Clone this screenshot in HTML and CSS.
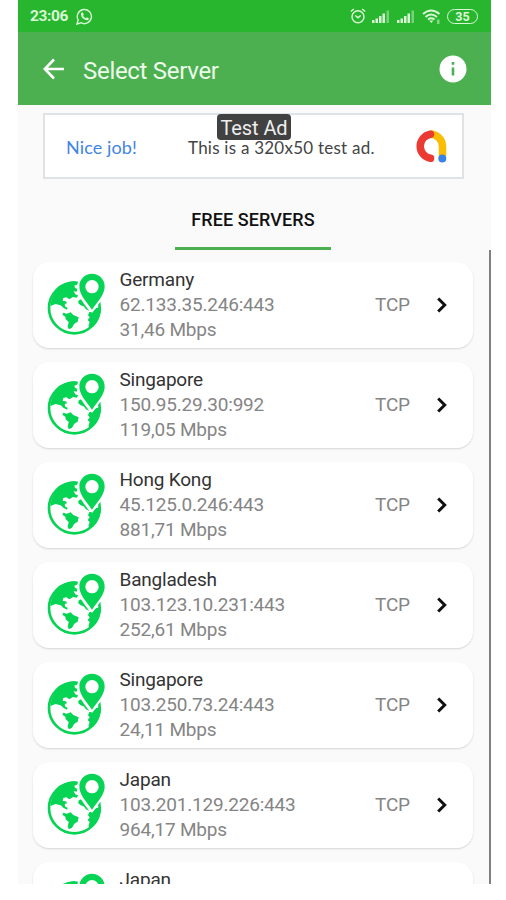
FILE: index.html
```html
<!DOCTYPE html>
<html lang="en">
<head>
    <meta charset="UTF-8">
    <meta name="viewport" content="width=device-width, initial-scale=1.0">
    <title>Select Server</title>
    <link rel="stylesheet" href="styles.css">
</head>
<body>
    <!-- Shared icons -->
    <svg class="sprite" aria-hidden="true">
        <symbol id="globe" viewBox="18 21 180 192">
            <circle cx="103" cy="129" r="76" fill="none" stroke="currentColor" stroke-width="8"/>
            <path fill="currentColor" d="M103 49 L112 52 L111 59 L103 62 L105 68 L112 72 L110 80 L101 79 L106 88 L114 91 L111 98 L99 96 L88 103 L79 97 L70 99 L68 108 L78 109 L81 115 L74 117 L76 125 L83 128 L81 134 L70 128 L62 121 L46 117 L32 123 C32 95 57 51 103 49 Z"/>
            <path fill="currentColor" d="M70 143 L80 146 L92 142 L100 150 L116 157 L113 170 L103 176 L96 188 L87 193 L83 185 L86 171 L77 163 L76 155 L67 149 Z"/>
            <path fill="currentColor" d="M183 125 C184 151 172 177 154 188 L145 184 L149 171 L143 165 L149 157 L144 151 L148 141 L158 141 L167 130 Z"/>
            <path fill="#fff" d="M156 144 L134 115 C121 98 112 84 112 64 C112 39 132 20 156 20 C180 20 200 39 200 64 C200 84 191 98 178 115 Z"/>
            <path fill="currentColor" d="M115 107 L123 103 L132 116 L148 138 L138 133 L131 124 L122 121 L115 115 Z"/>
            <path fill="currentColor" fill-rule="evenodd" d="M156 26 C176 26 194 42 194 64 C194 88 178 104 156 134 C134 104 118 88 118 64 C118 42 136 26 156 26 Z M156 45 A20 20 0 1 0 156 85 A20 20 0 1 0 156 45 Z"/>
        </symbol>
        <symbol id="chevron" viewBox="0 0 12 18">
            <path d="M2.2 2.5 L8.7 9 L2.2 15.5" fill="none" stroke="currentColor" stroke-width="3"/>
        </symbol>
        <symbol id="signal" viewBox="0 0 18 13">
            <path fill="currentColor" d="M0 10h2.5v3H0z M3.5 8.500H6V13H3.500z M7 6h2.500v7H7z M10.500 3.500H13V13h-2.500z"/>
            <path fill="currentColor" opacity=".45" d="M14.500 0.500H17V13h-2.500z"/>
        </symbol>
    </svg>

    <div class="screen">
        <!-- Status bar -->
        <div class="status-bar">
            <span class="clock">23:06</span>
            <svg class="whatsapp" viewBox="0 0 18 18">
                <path d="M2.300 12.700 A7.500 7.500 0 1 1 5.200 15.600 L1 17 Z" fill="none" stroke="currentColor" stroke-width="1.500"/>
                <path d="M5.500 5 L7 4.500 L8.300 7 L7.500 8.200 Q8.500 10 10.400 10.800 L11.500 9.800 L13.700 11 Q13.500 13 11.500 13 Q6 12 5.200 7 Z" fill="currentColor"/>
            </svg>
            <div class="status-icons">
                <svg class="alarm" viewBox="0 0 16 16">
                    <circle cx="8" cy="8.700" r="6" fill="none" stroke="currentColor" stroke-width="1.500"/>
                    <path d="M5.300 7.500 L8 9.700 L10.700 7.500 M0.800 3.500 L3.800 1 M15.200 3.500 L12.200 1" fill="none" stroke="currentColor" stroke-width="1.500"/>
                </svg>
                <svg class="signal"><use href="#signal"/></svg>
                <svg class="signal"><use href="#signal"/></svg>
                <svg class="wifi" viewBox="0 0 19 15">
                    <path d="M1 5 Q9 -2 17.500 5 M3.500 8 Q9 3 15 8 M6 10.500 Q9.200 8 12.500 10.500" fill="none" stroke="currentColor" stroke-width="2"/>
                    <path d="M7.300 11.500h4L9.300 14z" fill="currentColor"/>
                    <path d="M15 10.500h2.500V15H15z" fill="currentColor" opacity=".5"/>
                </svg>
                <span class="battery">35</span>
            </div>
        </div>

        <!-- App bar -->
        <header class="app-bar">
            <svg class="back" viewBox="0 0 22 22">
                <path d="M21 11 H2.500 M11 1.500 L1.800 11 L11 20.500" fill="none" stroke="currentColor" stroke-width="2.600"/>
            </svg>
            <h1 class="title">Select Server</h1>
            <svg class="info" viewBox="0 0 28 28">
                <circle cx="14" cy="14" r="13.500" fill="#fff"/>
                <path d="M12.700 7h2.600v2.700h-2.600z M12.700 12.400h2.600v8h-2.600z" fill="#4caf50"/>
            </svg>
        </header>

        <!-- Ad banner -->
        <div class="ad">
            <span class="ad-badge">Test Ad</span>
            <span class="ad-link">Nice job!</span>
            <span class="ad-text">This is a 320x50 test ad.</span>
            <svg class="ad-logo" viewBox="0 0 33 33">
                <path d="M16 4 A12.500 12.500 0 0 1 28.500 16.500 V26" fill="none" stroke="#fbbc04" stroke-width="7.500"/>
                <path d="M16.500 4.200 A12.200 12.200 0 0 0 16.500 28.300" fill="none" stroke="#ea3a32" stroke-width="7.500" stroke-linecap="round"/>
                <circle cx="28.300" cy="28.600" r="4" fill="#3b82e6"/>
            </svg>
        </div>

        <!-- Tabs -->
        <div class="tabs">
            <div class="tab">FREE SERVERS</div>
        </div>

        <!-- Server list -->
        <main class="server-list">
            <div class="card">
                <svg class="globe"><use href="#globe"/></svg>
                <div class="details">
                    <p class="country">Germany</p>
                    <p>62.133.35.246:443</p>
                    <p>31,46 Mbps</p>
                </div>
                <span class="protocol">TCP</span>
                <svg class="chevron"><use href="#chevron"/></svg>
            </div>
            <div class="card">
                <svg class="globe"><use href="#globe"/></svg>
                <div class="details">
                    <p class="country">Singapore</p>
                    <p>150.95.29.30:992</p>
                    <p>119,05 Mbps</p>
                </div>
                <span class="protocol">TCP</span>
                <svg class="chevron"><use href="#chevron"/></svg>
            </div>
            <div class="card">
                <svg class="globe"><use href="#globe"/></svg>
                <div class="details">
                    <p class="country">Hong Kong</p>
                    <p>45.125.0.246:443</p>
                    <p>881,71 Mbps</p>
                </div>
                <span class="protocol">TCP</span>
                <svg class="chevron"><use href="#chevron"/></svg>
            </div>
            <div class="card">
                <svg class="globe"><use href="#globe"/></svg>
                <div class="details">
                    <p class="country">Bangladesh</p>
                    <p>103.123.10.231:443</p>
                    <p>252,61 Mbps</p>
                </div>
                <span class="protocol">TCP</span>
                <svg class="chevron"><use href="#chevron"/></svg>
            </div>
            <div class="card">
                <svg class="globe"><use href="#globe"/></svg>
                <div class="details">
                    <p class="country">Singapore</p>
                    <p>103.250.73.24:443</p>
                    <p>24,11 Mbps</p>
                </div>
                <span class="protocol">TCP</span>
                <svg class="chevron"><use href="#chevron"/></svg>
            </div>
            <div class="card">
                <svg class="globe"><use href="#globe"/></svg>
                <div class="details">
                    <p class="country">Japan</p>
                    <p>103.201.129.226:443</p>
                    <p>964,17 Mbps</p>
                </div>
                <span class="protocol">TCP</span>
                <svg class="chevron"><use href="#chevron"/></svg>
            </div>
            <div class="card">
                <svg class="globe"><use href="#globe"/></svg>
                <div class="details">
                    <p class="country">Japan</p>
                </div>
            </div>
            <div class="scrollbar"></div>
        </main>
    </div>
</body>
</html>
```
FILE: styles.css
```css
:root {
    --status-green: #27b62d;
    --bar-green: #4caf50;
    --icon-green: #07d455;
    --page: #fafafa;
    --muted: #858585;
}

* {
    margin: 0;
    padding: 0;
    box-sizing: border-box;
}

body {
    background: #fff;
    font-family: Roboto, "Liberation Sans", sans-serif;
    overflow: hidden;
}

svg {
    display: block;
    flex-shrink: 0;
}

.sprite {
    position: absolute;
    width: 0;
    height: 0;
}

.screen {
    display: flex;
    flex-direction: column;
    width: 473px;
    height: 884px;
    margin-left: 18px;
    background: var(--page);
    overflow: hidden;
}

/* Status bar */
.status-bar {
    display: flex;
    align-items: center;
    height: 32px;
    padding: 0 13px 0 12px;
    background: var(--status-green);
    color: #d9f7d6;
    flex-shrink: 0;
}

.clock {
    width: 46px;
    font-size: 15.5px;
    font-weight: 700;
    letter-spacing: -0.4px;
    line-height: 32px;
}

.whatsapp {
    width: 17px;
    height: 17px;
}

.status-icons {
    display: flex;
    align-items: center;
    margin-left: auto;
}

.alarm {
    width: 16px;
    height: 16px;
    margin-right: 6px;
}

.signal {
    width: 18px;
    height: 13px;
    margin-right: 7px;
}

.wifi {
    width: 19px;
    height: 15px;
    margin-right: 6px;
}

.battery {
    width: 31px;
    height: 15px;
    border: 1.5px solid currentColor;
    border-radius: 8px;
    font-size: 12.5px;
    font-weight: 700;
    line-height: 13px;
    text-align: center;
}

/* App bar */
.app-bar {
    display: flex;
    align-items: center;
    height: 73px;
    padding: 0 24px 0 25px;
    background: var(--bar-green);
    color: #fff;
    flex-shrink: 0;
}

.back {
    width: 22px;
    height: 22px;
}

.title {
    margin-left: 18px;
    padding-top: 4px;
    font-size: 24px;
    font-weight: 400;
    letter-spacing: -0.3px;
    color: #edfbea;
}

.info {
    width: 28px;
    height: 28px;
    margin-left: auto;
}

/* Ad banner */
.ad {
    position: relative;
    display: flex;
    align-items: center;
    width: 421px;
    height: 66px;
    margin: 8px 0 0 25px;
    padding: 0 15px 0 21px;
    border: 2px solid #dfe3e6;
    background: #fff;
    font-family: Lato, sans-serif;
    flex-shrink: 0;
}

.ad-link {
    width: 122px;
    padding-top: 1px;
    font-size: 18px;
    letter-spacing: 0.1px;
    color: #4285e4;
}

.ad-text {
    padding-top: 2px;
    font-size: 17px;
    letter-spacing: 0.24px;
    color: #444;
    white-space: nowrap;
}

.ad-logo {
    width: 33px;
    height: 33px;
    margin-left: auto;
}

.ad-badge {
    position: absolute;
    top: -1px;
    left: 172px;
    width: 74px;
    height: 26px;
    border-radius: 4px;
    background: #414141;
    color: #eee;
    font: 20px/28px Roboto, sans-serif;
    letter-spacing: -0.1px;
    text-align: center;
}

/* Tabs */
.tabs {
    display: flex;
    justify-content: center;
    height: 71px;
    padding-right: 3px;
    flex-shrink: 0;
}

.tab {
    width: 156px;
    padding-top: 25px;
    border-bottom: 3px solid var(--bar-green);
    font-size: 18px;
    font-weight: 500;
    letter-spacing: 0.1px;
    line-height: 32px;
    text-align: center;
    color: #111;
}

/* Server list */
.server-list {
    position: relative;
    display: flex;
    flex-direction: column;
    gap: 14px;
    flex: 1;
    min-height: 0;
    padding: 12px 18px 0 15px;
    overflow: hidden;
}

.card {
    display: flex;
    align-items: center;
    height: 86px;
    padding: 0 25px 0 13px;
    border-radius: 16px;
    background: #fff;
    box-shadow: 0 1px 2px rgba(0, 0, 0, 0.15);
    flex-shrink: 0;
}

.globe {
    width: 60px;
    height: 64px;
    margin-bottom: 2px;
    color: var(--icon-green);
}

.details {
    align-self: flex-start;
    width: 243px;
    padding: 5px 0 0 13.5px;
    font-size: 19px;
    letter-spacing: -0.2px;
    line-height: 25px;
    color: var(--muted);
    white-space: nowrap;
}

.country {
    color: #333;
}

.protocol {
    width: 47px;
    margin: 0 0 2px 26px;
    font-size: 19px;
    letter-spacing: -0.2px;
    color: var(--muted);
}

.chevron {
    width: 12px;
    height: 18px;
    margin: 0 0 1px auto;
    color: #111;
}

.scrollbar {
    position: absolute;
    top: 0;
    right: 0;
    bottom: 0;
    width: 2px;
    background: #808080;
}
```
